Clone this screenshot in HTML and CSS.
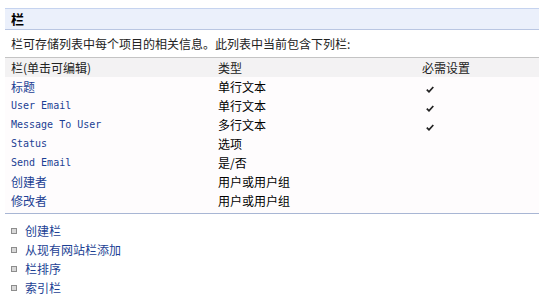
FILE: index.html
```html
<!DOCTYPE html>
<html lang="zh-CN">
<head>
  <meta charset="UTF-8">
  <title>栏</title>
  <link rel="stylesheet" href="styles.css">
</head>
<body>
<div class="page">
  <div class="section-title">栏</div>
  <div class="desc">栏可存储列表中每个项目的相关信息。此列表中当前包含下列栏:</div>

  <div class="cols">
    <div class="row head">
      <span>栏(单击可编辑)</span>
      <span>类型</span>
      <span>必需设置</span>
    </div>
    <div class="row">
      <a href="#">标题</a>
      <span>单行文本</span>
      <span><svg class="check" width="8" height="7" viewBox="0 0 8 7"><path d="M0.8 3.6 L3 5.8 L7.3 1" fill="none" stroke="#222" stroke-width="1.7"/></svg></span>
    </div>
    <div class="row">
      <a href="#" class="en">User Email</a>
      <span>单行文本</span>
      <span><svg class="check" width="8" height="7" viewBox="0 0 8 7"><path d="M0.8 3.6 L3 5.8 L7.3 1" fill="none" stroke="#222" stroke-width="1.7"/></svg></span>
    </div>
    <div class="row">
      <a href="#" class="en">Message To User</a>
      <span>多行文本</span>
      <span><svg class="check" width="8" height="7" viewBox="0 0 8 7"><path d="M0.8 3.6 L3 5.8 L7.3 1" fill="none" stroke="#222" stroke-width="1.7"/></svg></span>
    </div>
    <div class="row">
      <a href="#" class="en">Status</a>
      <span>选项</span>
      <span></span>
    </div>
    <div class="row">
      <a href="#" class="en">Send Email</a>
      <span>是/否</span>
      <span></span>
    </div>
    <div class="row">
      <a href="#">创建者</a>
      <span>用户或用户组</span>
      <span></span>
    </div>
    <div class="row">
      <a href="#">修改者</a>
      <span>用户或用户组</span>
      <span></span>
    </div>
  </div>

  <ul class="actions">
    <li><a href="#">创建栏</a></li>
    <li><a href="#">从现有网站栏添加</a></li>
    <li><a href="#">栏排序</a></li>
    <li><a href="#">索引栏</a></li>
  </ul>
</div>
</body>
</html>
```

FILE: styles.css
```css
body {
  margin: 0;
  background-color: #fff;
  font-family: "Noto Sans CJK SC", "Liberation Sans", sans-serif;
  font-size: 12px;
  color: #000;
}
.page {
  padding: 8px 0 0 5px;
}
a {
  color: #1c3f94;
  text-decoration: none;
}
.section-title {
  height: 20px;
  line-height: 20px;
  padding-left: 6px;
  background-color: #ebf0fb;
  border-top: 1px solid #c5d3ef;
  border-bottom: 1px solid #b9c6e2;
  font-weight: bold;
  font-size: 13px;
}
.desc {
  height: 27px;
  line-height: 27px;
  padding-left: 6px;
  color: #222;
}
.cols {
  border-top: 1px solid #c4c4c4;
  border-bottom: 1px solid #a8b6d4;
  background-color: #fefcfd;
  padding-bottom: 3px;
}
.row {
  display: grid;
  grid-template-columns: 207px 204px 1fr;
  height: 19px;
  line-height: 19px;
  padding-left: 6px;
}
.row.head {
  background-color: #f3f2f3;
  color: #222;
}
.row .en {
  font-family: "DejaVu Sans Mono", monospace;
  font-size: 10px;
  line-height: 18px;
  padding-top: 1px;
}
.check {
  margin-left: 4px;
  vertical-align: -1px;
}
.actions {
  list-style: none;
  margin: 7px 0 0;
  padding: 0 0 0 6px;
}
.actions li {
  display: flex;
  align-items: center;
  gap: 8px;
  height: 19px;
}
.actions li::before {
  content: "";
  width: 4px;
  height: 4px;
  border: 1px solid #8d8d8d;
  background-color: #d8d8d8;
}
```
